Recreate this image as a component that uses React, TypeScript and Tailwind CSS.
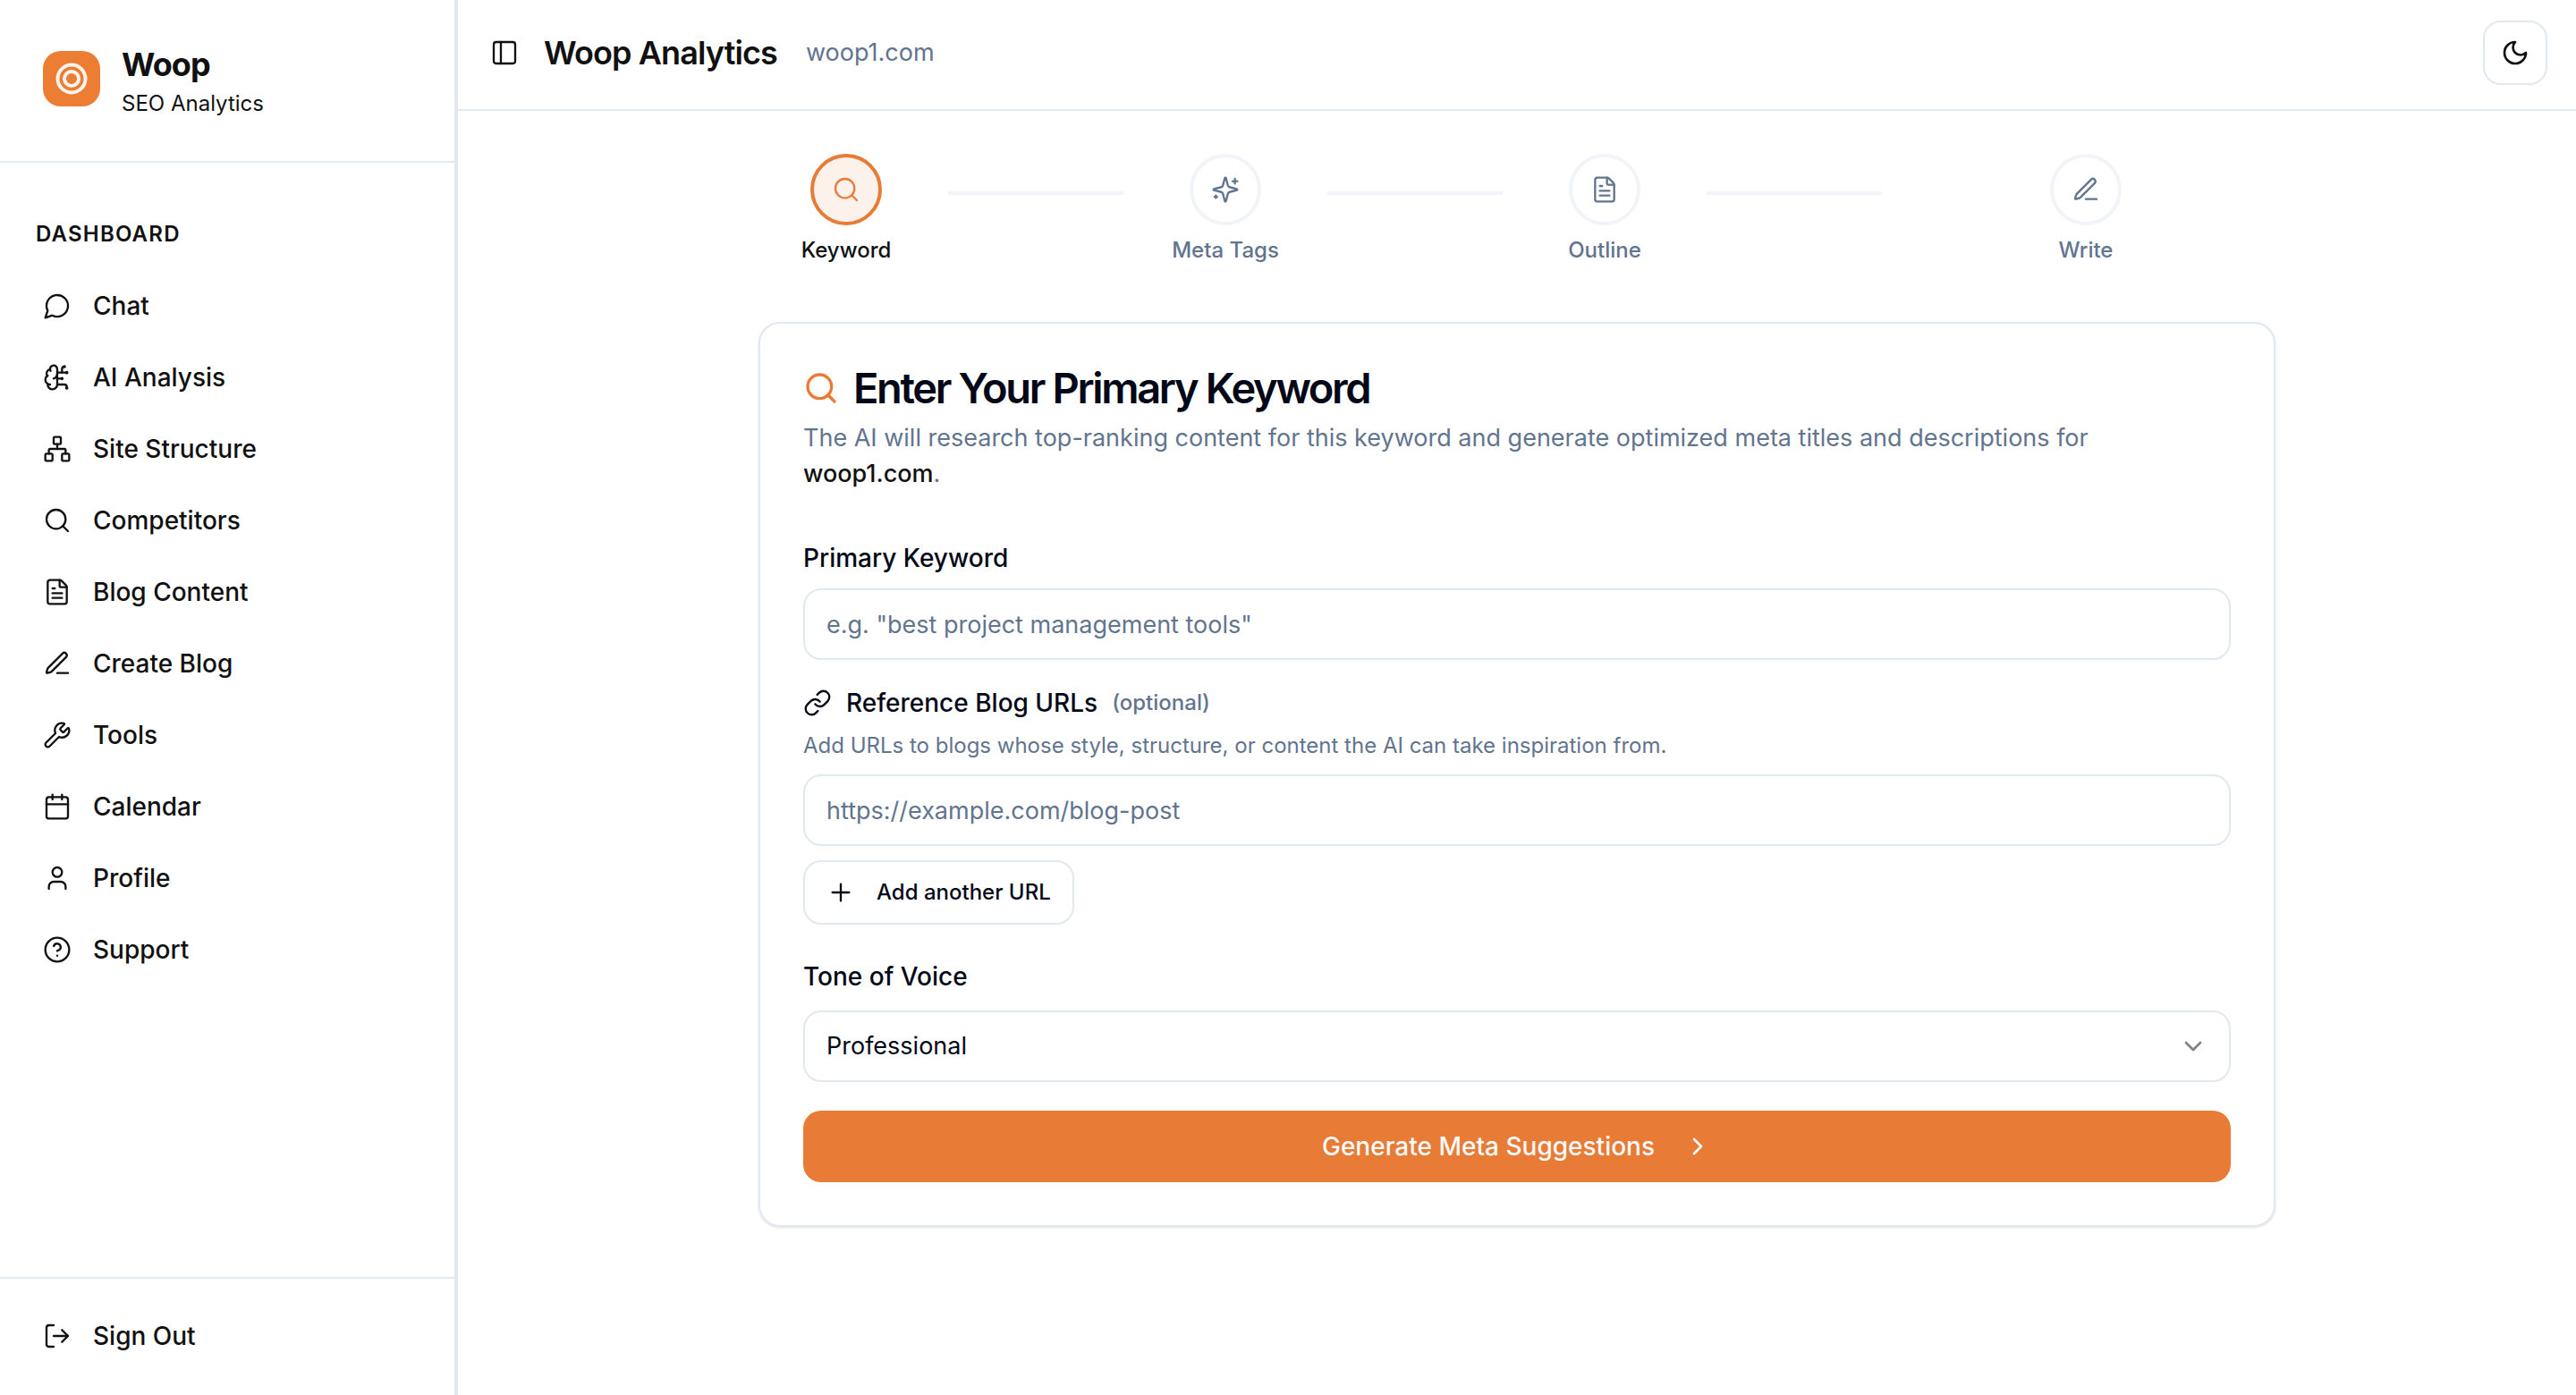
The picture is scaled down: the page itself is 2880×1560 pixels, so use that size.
import type { ReactNode } from 'react'
import {
    BrainCircuit,
    Calendar,
    ChevronDown,
    ChevronRight,
    CircleHelp,
    FileText,
    Link,
    LogOut,
    Network,
    PanelLeft,
    Plus,
    Search,
    User,
    Wrench,
} from 'lucide-react'

type IconProps = { className?: string; strokeWidth?: number }

function Glyph({ className, strokeWidth = 2, children }: IconProps & { children: ReactNode }) {
    return (
        <svg
            viewBox="0 0 24 24"
            fill="none"
            stroke="currentColor"
            strokeWidth={strokeWidth}
            strokeLinecap="round"
            strokeLinejoin="round"
            className={className}
            aria-hidden="true"
        >
            {children}
        </svg>
    )
}

function ChatIcon(props: IconProps) {
    return (
        <Glyph {...props}>
            <path d="M7.9 20A9 9 0 1 0 4 16.1L2 22Z" />
        </Glyph>
    )
}

function PenIcon(props: IconProps) {
    return (
        <Glyph {...props}>
            <path d="M12 20h9" />
            <path d="M16.376 3.622a1 1 0 0 1 3.002 3.002L7.368 18.635a2 2 0 0 1-.855.506l-2.872.838a.5.5 0 0 1-.62-.62l.838-2.872a2 2 0 0 1 .506-.854z" />
        </Glyph>
    )
}

function MoonIcon(props: IconProps) {
    return (
        <Glyph {...props}>
            <path d="M12 3a6 6 0 0 0 9 9 9 9 0 1 1-9-9Z" />
        </Glyph>
    )
}

function SparklesIcon(props: IconProps) {
    return (
        <Glyph {...props}>
            <path d="M9.937 15.5A2 2 0 0 0 8.5 14.063l-6.135-1.582a.5.5 0 0 1 0-.962L8.5 9.936A2 2 0 0 0 9.937 8.5l1.582-6.135a.5.5 0 0 1 .963 0L14.063 8.5A2 2 0 0 0 15.5 9.937l6.135 1.581a.5.5 0 0 1 0 .964L15.5 14.063a2 2 0 0 0-1.437 1.437l-1.582 6.135a.5.5 0 0 1-.963 0z" />
            <path d="M20 3v4" />
            <path d="M22 5h-4" />
            <path d="M4 17v2" />
            <path d="M5 18H3" />
        </Glyph>
    )
}

function Logo() {
    return (
        <svg viewBox="0 0 64 62" className="h-[62px] w-16 shrink-0" aria-hidden="true">
            <rect width="64" height="62" rx="20" fill="#ec7d33" />
            <circle cx="32" cy="31" r="15.5" fill="none" stroke="#f8f3ee" strokeWidth="4" />
            <circle cx="32" cy="31" r="8" fill="none" stroke="#f8f3ee" strokeWidth="4" />
        </svg>
    )
}

const navItems = [
    { label: 'Chat', icon: ChatIcon },
    { label: 'AI Analysis', icon: BrainCircuit },
    { label: 'Site Structure', icon: Network },
    { label: 'Competitors', icon: Search },
    { label: 'Blog Content', icon: FileText },
    { label: 'Create Blog', icon: PenIcon },
    { label: 'Tools', icon: Wrench },
    { label: 'Calendar', icon: Calendar },
    { label: 'Profile', icon: User },
    { label: 'Support', icon: CircleHelp },
]

const steps = [
    { label: 'Keyword', icon: Search },
    { label: 'Meta Tags', icon: SparklesIcon },
    { label: 'Outline', icon: FileText },
    { label: 'Write', icon: PenIcon },
]

function Sidebar() {
    return (
        <aside className="flex w-[512px] shrink-0 flex-col border-r-4 border-slate-200">
            <div className="flex items-center gap-6 border-b-2 border-slate-200 px-12 pt-11 pb-12">
                <Logo />
                <div>
                    <p className="text-[36px] leading-[56px] font-bold tracking-tight">Woop</p>
                    <p className="text-[24px] leading-8">SEO Analytics</p>
                </div>
            </div>

            <nav className="flex-1 px-6 pt-16">
                <h2 className="px-4 text-[24px] leading-8 font-semibold tracking-wider uppercase">
                    Dashboard
                </h2>
                <ul className="mt-7 flex flex-col gap-2">
                    {navItems.map(({ label, icon: Icon }) => (
                        <li key={label}>
                            <a
                                href="#"
                                className="flex h-[72px] items-center gap-6 px-6 text-[28px] font-medium"
                            >
                                <Icon className="size-8" strokeWidth={1.75} />
                                {label}
                            </a>
                        </li>
                    ))}
                </ul>
            </nav>

            <div className="border-t-2 border-slate-200 px-6 pt-7 pb-[30px]">
                <button
                    type="button"
                    className="flex h-[72px] w-full items-center gap-6 px-6 text-[28px] font-medium"
                >
                    <LogOut className="size-8" strokeWidth={1.75} />
                    Sign Out
                </button>
            </div>
        </aside>
    )
}

function Header() {
    return (
        <header className="flex items-center border-b-2 border-slate-200 px-8 pt-[23px] pb-[27px]">
            <button type="button" aria-label="Toggle sidebar" className="p-1">
                <PanelLeft className="size-8" strokeWidth={1.75} />
            </button>
            <h1 className="ml-6 text-[36px] leading-[56px] font-semibold tracking-tight">
                Woop Analytics
            </h1>
            <span className="ml-8 text-[27px] text-slate-500">woop1.com</span>
            <button
                type="button"
                aria-label="Switch theme"
                className="ml-auto flex size-[72px] items-center justify-center rounded-[20px] border-2 border-slate-200"
            >
                <MoonIcon className="size-8" />
            </button>
        </header>
    )
}

function Stepper() {
    return (
        <ol className="grid grid-cols-4">
            {steps.map(({ label, icon: Icon }, i) => {
                const active = i === 0
                const last = i === steps.length - 1
                return (
                    <li key={label} className="flex items-start">
                        <div className="flex flex-1 flex-col items-center gap-3">
                            <div
                                className={
                                    active
                                        ? 'flex size-20 items-center justify-center rounded-full border-4 border-[#e87b35] bg-[#fdf2eb] text-[#e87b35]'
                                        : 'flex size-20 items-center justify-center rounded-full border-4 border-slate-100 text-slate-500'
                                }
                            >
                                <Icon className="size-8" strokeWidth={1.75} />
                            </div>
                            <span
                                className={
                                    active
                                        ? 'text-[24px] leading-8 font-medium'
                                        : 'text-[24px] leading-8 font-medium text-slate-500'
                                }
                            >
                                {label}
                            </span>
                        </div>
                        {!last && <div className="mx-4 mt-[42px] h-1 flex-1 bg-slate-100" />}
                    </li>
                )
            })}
        </ol>
    )
}

function KeywordForm() {
    return (
        <section className="mt-16 rounded-3xl border-2 border-slate-200 p-12 text-[28px] leading-10 text-[#020817] shadow">
            <h2 className="flex items-center gap-4 text-[47px] leading-[48px] font-semibold tracking-tighter">
                <Search className="size-10 text-[#e87b35]" />
                Enter Your Primary Keyword
            </h2>
            <p className="mt-3 pr-12 text-[27px] leading-10 text-slate-500">
                The AI will research top-ranking content for this keyword and generate optimized
                meta titles and descriptions for{' '}
                <strong className="font-medium text-[#111111]">woop1.com</strong>.
            </p>

            <form className="mt-[54px] flex flex-col">
                <label htmlFor="keyword" className="font-medium">
                    Primary Keyword
                </label>
                <input
                    id="keyword"
                    type="text"
                    placeholder={'e.g. "best project management tools"'}
                    className="mt-[14px] h-20 w-full rounded-[20px] border-2 border-slate-200 px-6 text-[27px] placeholder:text-slate-500"
                />

                <label htmlFor="reference-url" className="mt-7 flex items-center gap-4 font-medium">
                    <Link className="size-8" strokeWidth={1.75} />
                    Reference Blog URLs
                    <span className="text-[24px] text-slate-500">(optional)</span>
                </label>
                <p className="mt-3 text-[24px] leading-8 text-slate-500">
                    Add URLs to blogs whose style, structure, or content the AI can take
                    inspiration from.
                </p>
                <input
                    id="reference-url"
                    type="url"
                    placeholder="https://example.com/blog-post"
                    className="mt-4 h-20 w-full rounded-[20px] border-2 border-slate-200 px-6 text-[27px] placeholder:text-slate-500"
                />
                <button
                    type="button"
                    className="mt-4 flex h-[72px] items-center gap-6 self-start rounded-[20px] border-2 border-slate-200 px-6 text-[24px] font-medium"
                >
                    <Plus className="size-8" strokeWidth={1.75} />
                    Add another URL
                </button>

                <label htmlFor="tone" className="mt-[38px] font-medium">
                    Tone of Voice
                </label>
                <div className="relative mt-[18px]">
                    <select
                        id="tone"
                        className="h-20 w-full appearance-none rounded-[20px] border-2 border-slate-200 bg-white px-6 text-[27px]"
                    >
                        <option>Professional</option>
                    </select>
                    <ChevronDown className="pointer-events-none absolute top-6 right-[26px] size-8 opacity-50" />
                </div>

                <button
                    type="submit"
                    className="mt-8 flex h-20 w-full items-center justify-center gap-8 rounded-[20px] bg-[#e87b35] font-medium text-slate-50"
                >
                    Generate Meta Suggestions
                    <ChevronRight className="size-8" />
                </button>
            </form>
        </section>
    )
}

export default function App() {
    return (
        <div className="flex min-h-screen bg-white font-['Inter',sans-serif] text-[#111111]">
            <Sidebar />
            <div className="min-w-0 flex-1">
                <Header />
                <main className="mx-auto max-w-[1792px] p-12">
                    <Stepper />
                    <KeywordForm />
                </main>
            </div>
        </div>
    )
}
